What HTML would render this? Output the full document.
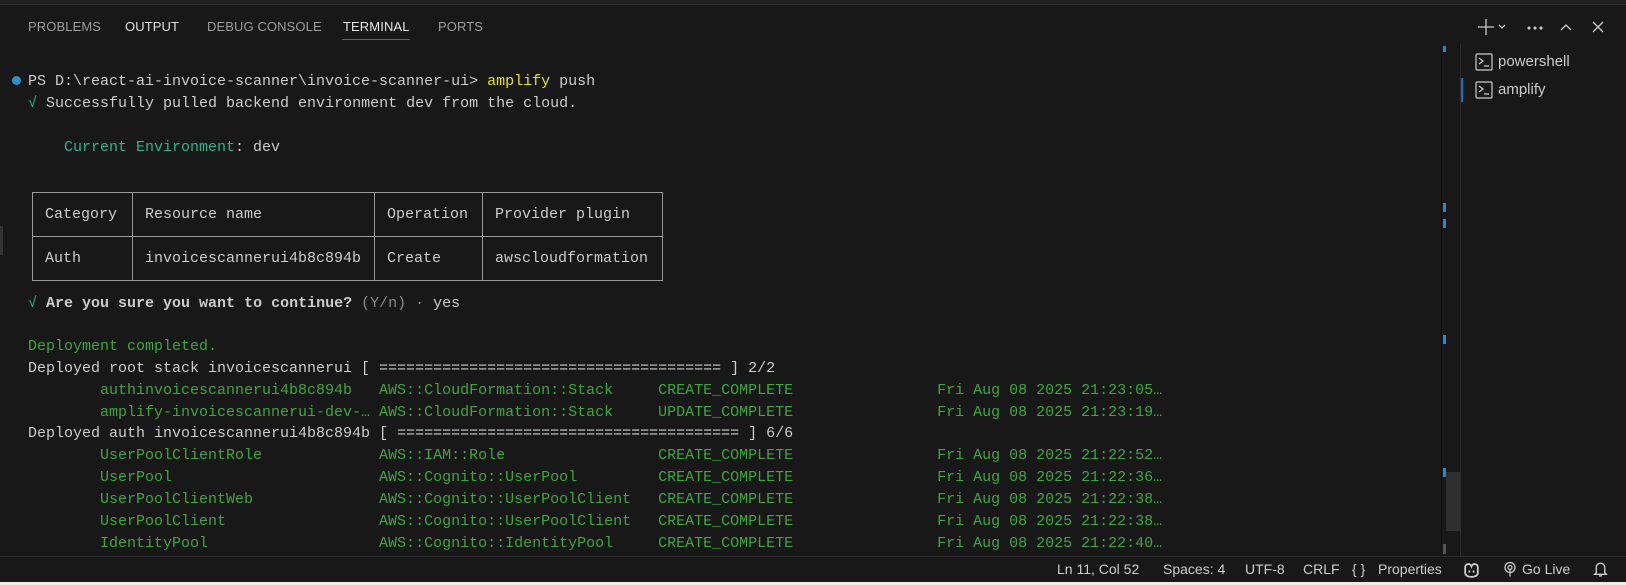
<!DOCTYPE html>
<html><head><meta charset="utf-8"><style>
*{margin:0;padding:0;box-sizing:border-box}
html,body{width:1626px;height:585px;overflow:hidden;background:#181818}
body{position:relative;font-family:"Liberation Sans",sans-serif}
.top{position:absolute;left:0;top:0;width:1626px;height:5px;background:#1f1f1f;border-bottom:1px solid #2b2b2b}
.tab{position:absolute;top:19px;font-size:13px;color:#9d9d9d;letter-spacing:0.1px}
.ul{position:absolute;left:342px;top:39px;width:68px;height:1px;background:#0078d4}
.m{position:absolute;font-family:"Liberation Mono",monospace;font-size:15px;color:#cccccc;white-space:pre;line-height:21.85px}
.g{color:#3fa53f}.c{color:#2bb38c}.y{color:#e5e510}.ck{color:#24c08a}.d{color:#8a8a8a}
table{position:absolute;left:32px;top:192px;border-collapse:collapse;font-family:"Liberation Mono",monospace;font-size:15px;color:#cccccc;table-layout:fixed}
td{border:1px solid #9a9a9a;height:44px;padding:0 12px;white-space:pre}
.sb{position:absolute;left:0;top:556px;width:1626px;height:26px;background:#181818;border-top:1px solid #2b2b2b}
.si{position:absolute;top:561px;font-size:14px;color:#cccccc}
.bot{position:absolute;left:0;top:582px;width:1626px;height:3px;background:#efece7}
.mk{position:absolute;left:1443px;width:3px;height:9px;background:#1f8ad2}
</style></head><body>
<div class="top"></div>
<div class="tab" style="left:28px">PROBLEMS</div>
<div class="tab" style="left:125px;color:#e0e0e0">OUTPUT</div>
<div class="tab" style="left:207px">DEBUG CONSOLE</div>
<div class="tab" style="left:343px;color:#e7e7e7">TERMINAL</div>
<div class="tab" style="left:438px">PORTS</div>
<div class="ul"></div>

<svg style="position:absolute;left:1476px;top:17px" width="130" height="20" viewBox="0 0 130 20" fill="none" stroke="#cccccc" stroke-width="1.3">
<path d="M2 10h16M10 2v16"/><path d="M23 8l3 3 3-3"/>
<circle cx="53" cy="11" r="0.9" fill="#ccc"/><circle cx="59" cy="11" r="0.9" fill="#ccc"/><circle cx="65" cy="11" r="0.9" fill="#ccc"/>
<path d="M85 13l5-5 5 5"/><path d="M117 5l10 10M127 5l-10 10"/>
</svg>

<div style="position:absolute;left:1460px;top:44px;width:1px;height:512px;background:#2b2b2b"></div>
<div style="position:absolute;left:1461px;top:78px;width:2px;height:24px;background:#0078d4"></div>
<svg style="position:absolute;left:1475px;top:53px" width="18" height="18" viewBox="0 0 18 18" fill="none" stroke="#cccccc" stroke-width="1.2"><rect x="1" y="1" width="16" height="16" rx="1"/><path d="M4 5l4 3-4 3M9 13h5"/></svg>
<div class="si" style="left:1498px;top:53px;font-size:15px">powershell</div>
<svg style="position:absolute;left:1475px;top:81px" width="18" height="18" viewBox="0 0 18 18" fill="none" stroke="#cccccc" stroke-width="1.2"><rect x="1" y="1" width="16" height="16" rx="1"/><path d="M4 5l4 3-4 3M9 13h5"/></svg>
<div class="si" style="left:1498px;top:81px;font-size:15px">amplify</div>

<div style="position:absolute;left:1441px;top:46px;width:1px;height:510px;background:#111"></div>
<div class="mk" style="top:46px;height:6px"></div>
<div class="mk" style="top:203px"></div>
<div class="mk" style="top:219px"></div>
<div class="mk" style="top:335px"></div>
<div class="mk" style="top:468px"></div>
<div style="position:absolute;left:1446px;top:472px;width:14px;height:59px;background:#2f2f2f"></div>
<div style="position:absolute;left:1443px;top:544px;width:3px;height:10px;background:#555"></div>
<div style="position:absolute;left:0;top:226px;width:3px;height:29px;background:#333"></div>

<div style="position:absolute;left:12px;top:76px;width:9px;height:9px;border-radius:50%;background:#2f8fc7"></div>
<div class="m" style="left:28px;top:71px">PS D:\react-ai-invoice-scanner\invoice-scanner-ui&gt; <span class="y">amplify</span> push</div>
<div class="m" style="left:28px;top:93px"><span class="ck">√</span> Successfully pulled backend environment dev from the cloud.</div>
<div class="m" style="left:28px;top:137px">    <span class="c">Current Environment</span>: dev</div>

<table>
<tr><td style="width:100px">Category</td><td style="width:242px">Resource name</td><td style="width:108px">Operation</td><td style="width:180px">Provider plugin</td></tr>
<tr><td>Auth</td><td>invoicescannerui4b8c894b</td><td>Create</td><td>awscloudformation</td></tr>
</table>

<div class="m" style="left:28px;top:293px"><span class="ck">√</span> <b>Are you sure you want to continue?</b> <span class="d">(Y/n) · </span>yes</div>
<div class="m" style="left:28px;top:336px"><span class="g">Deployment completed.</span>
Deployed root stack invoicescannerui [ ====================================== ] 2/2
<span class="g">        authinvoicescannerui4b8c894b   AWS::CloudFormation::Stack     CREATE_COMPLETE                Fri Aug 08 2025 21:23:05…
        amplify-invoicescannerui-dev-… AWS::CloudFormation::Stack     UPDATE_COMPLETE                Fri Aug 08 2025 21:23:19…</span>
Deployed auth invoicescannerui4b8c894b [ ====================================== ] 6/6
<span class="g">        UserPoolClientRole             AWS::IAM::Role                 CREATE_COMPLETE                Fri Aug 08 2025 21:22:52…
        UserPool                       AWS::Cognito::UserPool         CREATE_COMPLETE                Fri Aug 08 2025 21:22:36…
        UserPoolClientWeb              AWS::Cognito::UserPoolClient   CREATE_COMPLETE                Fri Aug 08 2025 21:22:38…
        UserPoolClient                 AWS::Cognito::UserPoolClient   CREATE_COMPLETE                Fri Aug 08 2025 21:22:38…
        IdentityPool                   AWS::Cognito::IdentityPool     CREATE_COMPLETE                Fri Aug 08 2025 21:22:40…</span></div>

<div class="sb"></div>
<div class="si" style="left:1057px">Ln 11, Col 52</div>
<div class="si" style="left:1163px">Spaces: 4</div>
<div class="si" style="left:1245px">UTF-8</div>
<div class="si" style="left:1303px">CRLF</div>
<div class="si" style="left:1352px">{ }</div>
<div class="si" style="left:1378px">Properties</div>
<svg style="position:absolute;left:1462px;top:561px" width="19" height="17" viewBox="0 0 18 16" fill="none" stroke="#cccccc" stroke-width="1.7"><path d="M3 6c0-4 5-4 6-1 1-3 6-3 6 1v5c0 3-3 4-6 4s-6-1-6-4z"/><path d="M7 9v2M11 9v2"/></svg>
<svg style="position:absolute;left:1503px;top:561px" width="14" height="17" viewBox="0 0 14 16" fill="none" stroke="#cccccc" stroke-width="1.3"><circle cx="7" cy="6" r="5"/><circle cx="7" cy="6" r="2"/><path d="M7 8v7"/></svg>
<div class="si" style="left:1522px">Go Live</div>
<svg style="position:absolute;left:1593px;top:560px" width="15" height="18" viewBox="0 0 14 17" fill="none" stroke="#cccccc" stroke-width="1.3"><path d="M3 12V7a4 4 0 018 0v5l1.5 1.5h-11z"/><path d="M5.5 15h3"/></svg>
<div class="bot"></div>
</body></html>
